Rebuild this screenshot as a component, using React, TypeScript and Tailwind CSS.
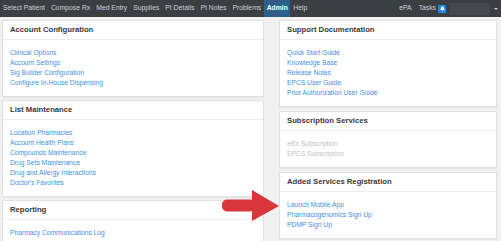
import { FaBell } from "react-icons/fa"

const navItems = [
  "Select Patient",
  "Compose Rx",
  "Med Entry",
  "Supplies",
  "Pt Details",
  "Pt Notes",
  "Problems",
  "Admin",
  "Help",
]

type LinkItem = { label: string; disabled?: boolean }

type PanelProps = {
  title: string
  links: LinkItem[]
}

const Panel: React.FC<PanelProps> = ({ title, links }) => {
  return (
    <div className="border border-[#e1e1e1] bg-white shadow-[0_1px_1px_rgba(0,0,0,0.04)]">
      <div className="flex h-[19px] items-center border-b border-[#ececec] px-[7px] text-[7.7px] font-bold text-[#383838]">
        {title}
      </div>
      <div className="flex flex-col px-[7px] py-2">
        {links.map((link) => (
          <span
            key={link.label}
            className={
              link.disabled
                ? "text-[6.7px] leading-[10px] text-[#c2c2c2]"
                : "text-[6.7px] leading-[10px] text-[#3f8fe0]"
            }
          >
            {link.label}
          </span>
        ))}
      </div>
    </div>
  )
}

export default function App() {
  return (
    <div className="relative h-[241px] w-[501px] overflow-hidden bg-[#f1f1f1] font-['Liberation_Sans',Arial,sans-serif]">
      {/* top nav */}
      <div className="flex h-[17px] items-stretch bg-[#3b3e43] text-[6.8px] text-[#cfd1d3]">
        <div className="flex items-stretch pl-[-1px]">
          {navItems.map((item) =>
            item === "Admin" ? (
              <span
                key={item}
                className="flex items-center bg-[#2c5f8a] px-[2.5px] font-bold text-white"
              >
                {item}
              </span>
            ) : (
              <span key={item} className="flex items-center px-[3px]">
                {item}
              </span>
            ),
          )}
        </div>
        <div className="ml-auto flex items-center pr-[3px]">
          <span className="mr-[7px]">ePA</span>
          <span className="mr-[2px]">Tasks</span>
          <span className="mr-[4px] flex h-[8px] w-[8px] items-center justify-center rounded-[1px] bg-[#1d86e8]">
            <FaBell className="text-white" size={5} />
          </span>
          <span className="h-[12px] w-[40px] bg-[#45484d]" />
          <span className="ml-[4px] h-0 w-0 border-x-[2px] border-t-[2px] border-x-transparent border-t-[#c9cbcd]" />
        </div>
      </div>

      {/* columns */}
      <div className="flex gap-[15px] pl-[2px] pr-[4px] pt-[3px]">
        <div className="flex w-[262px] flex-col gap-[3px]">
          <Panel
            title="Account Configuration"
            links={[
              { label: "Clinical Options" },
              { label: "Account Settings" },
              { label: "Sig Builder Configuration" },
              { label: "Configure In-House Dispensing" },
            ]}
          />
          <Panel
            title="List Maintenance"
            links={[
              { label: "Location Pharmacies" },
              { label: "Account Health Plans" },
              { label: "Compounds Maintenance" },
              { label: "Drug Sets Maintenance" },
              { label: "Drug and Allergy Interactions" },
              { label: "Doctor's Favorites" },
            ]}
          />
          <Panel
            title="Reporting"
            links={[{ label: "Pharmacy Communications Log" }]}
          />
        </div>
        <div className="flex flex-1 flex-col gap-[4px]">
          <Panel
            title="Support Documentation"
            links={[
              { label: "Quick Start Guide" },
              { label: "Knowledge Base" },
              { label: "Release Notes" },
              { label: "EPCS User Guide" },
              { label: "Prior Authorization User Guide" },
            ]}
          />
          <Panel
            title="Subscription Services"
            links={[
              { label: "eRx Subscription", disabled: true },
              { label: "EPCS Subscription", disabled: true },
            ]}
          />
          <Panel
            title="Added Services Registration"
            links={[
              { label: "Launch Mobile App" },
              { label: "Pharmacogenomics Sign Up" },
              { label: "PDMP Sign Up" },
            ]}
          />
        </div>
      </div>

      {/* red arrow pointing at Launch Mobile App */}
      <svg
        className="absolute left-[222px] top-[190px]"
        width="58"
        height="31"
        viewBox="0 0 58 31"
      >
        <rect x="0" y="9.5" width="33" height="12" rx="5" fill="#d8363a" />
        <polygon points="30,0 57,16 30,31" fill="#d8363a" />
      </svg>
    </div>
  )
}
